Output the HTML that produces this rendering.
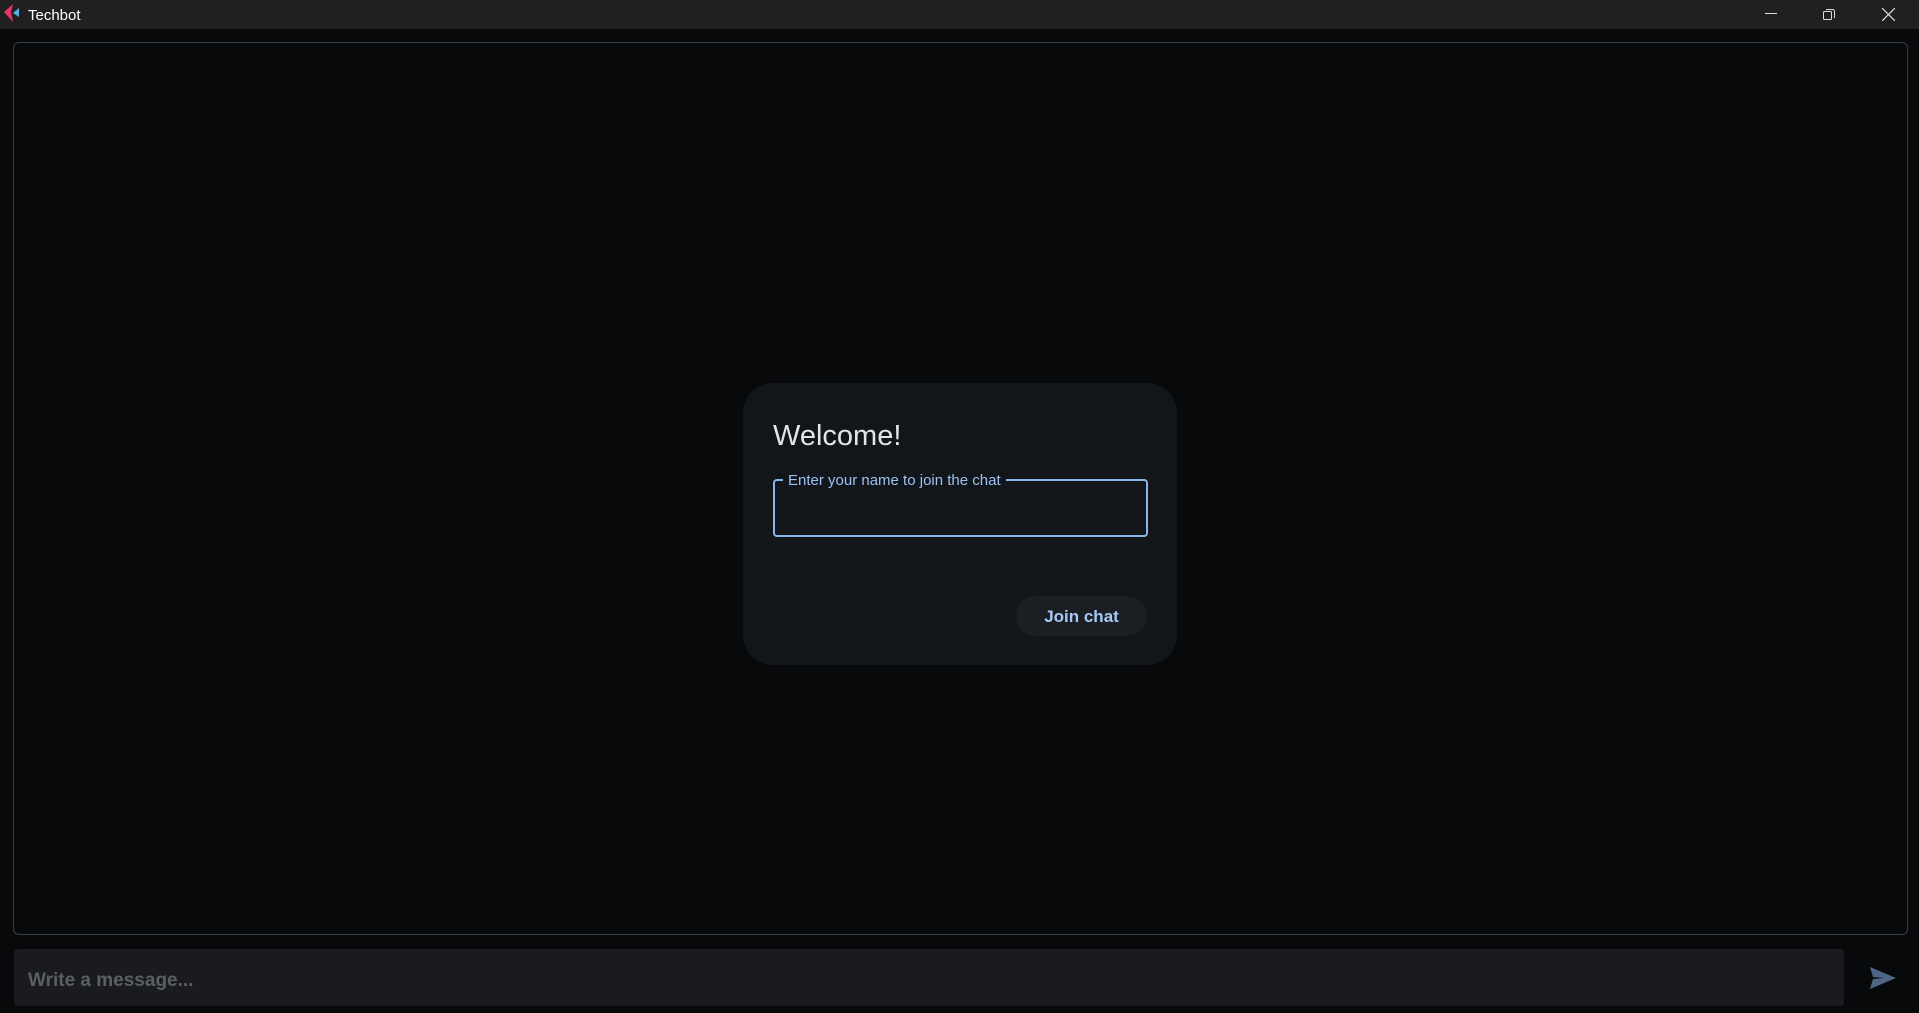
<!DOCTYPE html>
<html><head><meta charset="utf-8"><style>
*{margin:0;padding:0;box-sizing:border-box}
html,body{width:1919px;height:1013px;overflow:hidden;background:#08090b;font-family:"Liberation Sans",sans-serif}
.tb{position:absolute;left:0;top:0;width:1919px;height:29px;background:#202020;color:#fff}
.tb .t{position:absolute;left:28px;top:7px;font-size:15px}
.chat{position:absolute;left:13px;top:42px;width:1895px;height:893px;border:1px solid #3a3d42;border-radius:6px}
.card{position:absolute;left:743px;top:383px;width:434px;height:282px;background:#12151a;border-radius:30px}
.card h1{position:absolute;left:30px;top:37px;font-weight:normal;font-size:29px;color:#e2e4e8}
.field{position:absolute;left:30px;top:96px;width:375px;height:58px;border:2px solid #8ab4ec;border-radius:4px}
.field span{position:absolute;left:8px;top:-8px;background:#12151a;padding:0 5px;color:#9cc2f2;font-size:15px;line-height:16px}
.btn{position:absolute;left:273px;top:213px;width:131px;height:40px;border-radius:20px;background:#1b1e23;color:#a8c8f5;font-weight:bold;font-size:17px;text-align:center;line-height:42px}
.in{position:absolute;left:14px;top:949px;width:1830px;height:57px;background:#1a1b1f;border-radius:4px}
.in span{position:absolute;left:14px;top:21px;font-size:19px;color:#5b5e64;font-weight:bold}
</style></head><body>
<div class="tb">
<svg style="position:absolute;left:3px;top:4px" width="18" height="19" viewBox="0 0 18 19"><path d="M10 0 L1 8 L10 18 L8 8 Z" fill="#e8336a"/><path d="M16 4 L10 9 L16 13 Z" fill="#56b0e6"/></svg>
<span class="t">Techbot</span>
<svg style="position:absolute;left:1765px;top:13px" width="12" height="2"><rect width="12" height="1" fill="#ddd"/></svg>
<svg style="position:absolute;left:1822px;top:8px" width="14" height="14" viewBox="0 0 14 14" fill="none" stroke="#ddd"><rect x="1.5" y="3.5" width="8" height="8" rx="1"/><path d="M4 1.5h6.5a2 2 0 0 1 2 2V10"/></svg>
<svg style="position:absolute;left:1882px;top:8px" width="13" height="13" viewBox="0 0 13 13" stroke="#ddd" stroke-width="1.2"><path d="M0 0L13 13M13 0L0 13"/></svg>
</div>
<div class="chat"></div>
<div class="card">
<h1>Welcome!</h1>
<div class="field"><span>Enter your name to join the chat</span></div>
<div class="btn">Join chat</div>
</div>
<div class="in"><span>Write a message...</span></div>
<svg style="position:absolute;left:1870px;top:967px" width="26" height="22" viewBox="0 0 26 22"><path d="M0 0 L26 11 L0 22 L3 12 L14 11 L3 10 Z" fill="#4e6686"/></svg>
</body></html>
